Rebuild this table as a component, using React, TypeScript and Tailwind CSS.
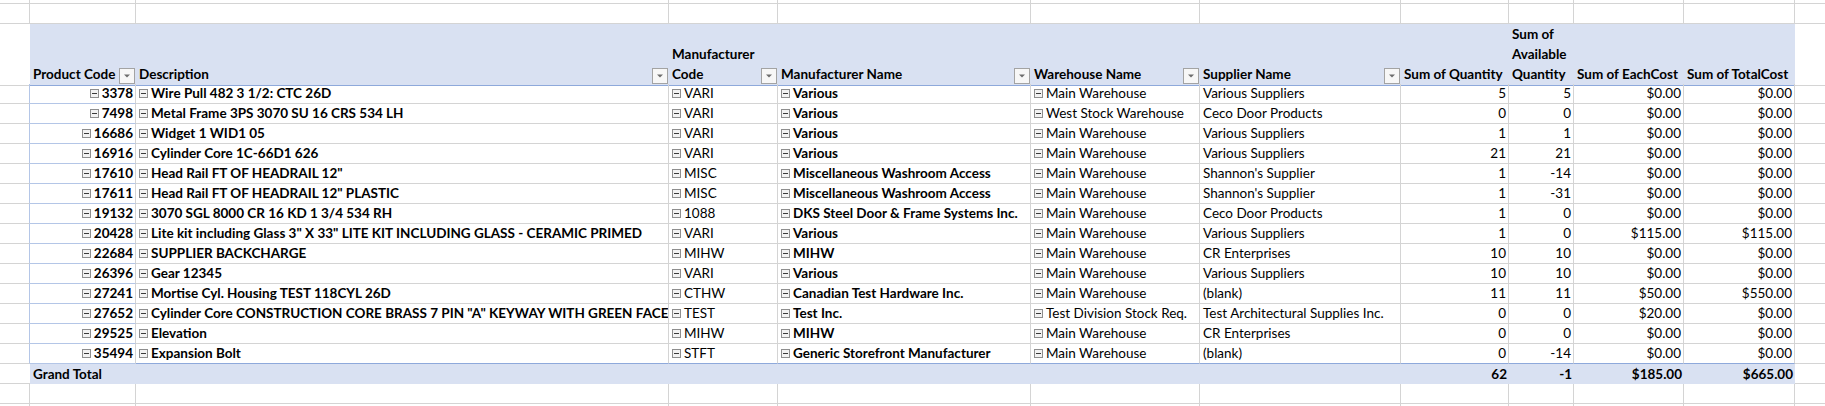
import React from "react";

type Row = {
  code: string;
  desc: string;
  mfrCode: string;
  mfrName: string;
  warehouse: string;
  supplier: string;
  qty: string;
  avail: string;
  each: string;
  total: string;
};

const rows: Row[] = [
  { code: "3378", desc: "Wire Pull 482 3 1/2: CTC 26D", mfrCode: "VARI", mfrName: "Various", warehouse: "Main Warehouse", supplier: "Various Suppliers", qty: "5", avail: "5", each: "$0.00", total: "$0.00" },
  { code: "7498", desc: "Metal Frame 3PS 3070 SU 16 CRS 534 LH", mfrCode: "VARI", mfrName: "Various", warehouse: "West Stock Warehouse", supplier: "Ceco Door Products", qty: "0", avail: "0", each: "$0.00", total: "$0.00" },
  { code: "16686", desc: "Widget 1 WID1 05", mfrCode: "VARI", mfrName: "Various", warehouse: "Main Warehouse", supplier: "Various Suppliers", qty: "1", avail: "1", each: "$0.00", total: "$0.00" },
  { code: "16916", desc: "Cylinder Core 1C-66D1 626", mfrCode: "VARI", mfrName: "Various", warehouse: "Main Warehouse", supplier: "Various Suppliers", qty: "21", avail: "21", each: "$0.00", total: "$0.00" },
  { code: "17610", desc: 'Head Rail FT OF HEADRAIL 12"', mfrCode: "MISC", mfrName: "Miscellaneous Washroom Access", warehouse: "Main Warehouse", supplier: "Shannon's Supplier", qty: "1", avail: "-14", each: "$0.00", total: "$0.00" },
  { code: "17611", desc: 'Head Rail FT OF HEADRAIL 12" PLASTIC', mfrCode: "MISC", mfrName: "Miscellaneous Washroom Access", warehouse: "Main Warehouse", supplier: "Shannon's Supplier", qty: "1", avail: "-31", each: "$0.00", total: "$0.00" },
  { code: "19132", desc: "3070 SGL 8000 CR 16 KD 1 3/4 534 RH", mfrCode: "1088", mfrName: "DKS Steel Door & Frame Systems Inc.", warehouse: "Main Warehouse", supplier: "Ceco Door Products", qty: "1", avail: "0", each: "$0.00", total: "$0.00" },
  { code: "20428", desc: 'Lite kit including Glass 3" X 33" LITE KIT INCLUDING GLASS - CERAMIC PRIMED', mfrCode: "VARI", mfrName: "Various", warehouse: "Main Warehouse", supplier: "Various Suppliers", qty: "1", avail: "0", each: "$115.00", total: "$115.00" },
  { code: "22684", desc: "SUPPLIER BACKCHARGE", mfrCode: "MIHW", mfrName: "MIHW", warehouse: "Main Warehouse", supplier: "CR Enterprises", qty: "10", avail: "10", each: "$0.00", total: "$0.00" },
  { code: "26396", desc: "Gear 12345", mfrCode: "VARI", mfrName: "Various", warehouse: "Main Warehouse", supplier: "Various Suppliers", qty: "10", avail: "10", each: "$0.00", total: "$0.00" },
  { code: "27241", desc: "Mortise Cyl. Housing TEST 118CYL 26D", mfrCode: "CTHW", mfrName: "Canadian Test Hardware Inc.", warehouse: "Main Warehouse", supplier: "(blank)", qty: "11", avail: "11", each: "$50.00", total: "$550.00" },
  { code: "27652", desc: 'Cylinder Core CONSTRUCTION CORE BRASS 7 PIN "A" KEYWAY WITH GREEN FACE', mfrCode: "TEST", mfrName: "Test Inc.", warehouse: "Test Division Stock Req.", supplier: "Test Architectural Supplies Inc.", qty: "0", avail: "0", each: "$20.00", total: "$0.00" },
  { code: "29525", desc: "Elevation", mfrCode: "MIHW", mfrName: "MIHW", warehouse: "Main Warehouse", supplier: "CR Enterprises", qty: "0", avail: "0", each: "$0.00", total: "$0.00" },
  { code: "35494", desc: "Expansion Bolt", mfrCode: "STFT", mfrName: "Generic Storefront Manufacturer", warehouse: "Main Warehouse", supplier: "(blank)", qty: "0", avail: "-14", each: "$0.00", total: "$0.00" },
];

const grid =
  "grid grid-cols-[30px_106px_533px_109px_253px_169px_201px_108px_65px_110px_111px_1fr]";

function Collapse() {
  return (
    <svg width="9" height="9" viewBox="0 0 9 9" className="shrink-0 mr-[3px] mb-[5px]">
      <rect x="0.5" y="0.5" width="8" height="8" fill="#f2f2f2" stroke="#8e8e8e" />
      <line x1="2" y1="4.5" x2="7" y2="4.5" stroke="#3a3a3a" />
    </svg>
  );
}

function Filter() {
  return (
    <svg width="16" height="16" viewBox="0 0 16 16" className="shrink-0 mb-[1px]">
      <rect x="0.5" y="0.5" width="15" height="15" fill="#f7f7f7" stroke="#a3a3a3" />
      <polygon points="5,6.5 11,6.5 8,9.5" fill="#6d6d6d" />
    </svg>
  );
}

function GridRow({ h = "h-[20px]" }: { h?: string }) {
  return (
    <div className={`${grid} ${h}`}>
      {Array.from({ length: 12 }).map((_, i) => (
        <div
          key={i}
          className={`border-b border-[#d4d4d4] ${i < 11 ? "border-r" : ""}`}
        />
      ))}
    </div>
  );
}

const cell = "border-b border-r border-[#d4d4d4] flex items-end leading-[20px] whitespace-nowrap overflow-hidden";

export default function App() {
  return (
    <div className="w-[1825px] h-[406px] overflow-hidden bg-white text-black text-[13.5px] font-['Lato','Liberation_Sans',sans-serif]">
      <GridRow h="h-[4px]" />
      <GridRow />

      {/* header */}
      <div className={`${grid} h-[60px]`}>
        <div className="border-b border-[#d4d4d4]" />
        <div className="bg-[#d9e1f2] border-b border-[#8ea9db] flex items-end justify-between pl-[3px] pr-[1px] font-bold leading-[20px]">
          <span className="mb-[1px]">Product Code</span>
          <Filter />
        </div>
        <div className="bg-[#d9e1f2] border-b border-[#8ea9db] flex items-end justify-between pl-[3px] pr-[1px] font-bold leading-[20px]">
          <span className="mb-[1px]">Description</span>
          <Filter />
        </div>
        <div className="bg-[#d9e1f2] border-b border-[#8ea9db] flex items-end justify-between pl-[3px] pr-[1px] font-bold leading-[20px]">
          <span className="mb-[1px]">
            Manufacturer
            <br />
            Code
          </span>
          <Filter />
        </div>
        <div className="bg-[#d9e1f2] border-b border-[#8ea9db] flex items-end justify-between pl-[3px] pr-[1px] font-bold leading-[20px]">
          <span className="mb-[1px]">Manufacturer Name</span>
          <Filter />
        </div>
        <div className="bg-[#d9e1f2] border-b border-[#8ea9db] flex items-end justify-between pl-[3px] pr-[1px] font-bold leading-[20px]">
          <span className="mb-[1px]">Warehouse Name</span>
          <Filter />
        </div>
        <div className="bg-[#d9e1f2] border-b border-[#8ea9db] flex items-end justify-between pl-[3px] pr-[1px] font-bold leading-[20px]">
          <span className="mb-[1px]">Supplier Name</span>
          <Filter />
        </div>
        <div className="bg-[#d9e1f2] border-b border-[#8ea9db] flex items-end pl-[3px] font-bold leading-[20px] whitespace-nowrap">
          <span className="mb-[1px]">Sum of Quantity</span>
        </div>
        <div className="bg-[#d9e1f2] border-b border-[#8ea9db] flex items-end pl-[3px] font-bold leading-[20px]">
          <span className="mb-[1px]">
            Sum of
            <br />
            Available
            <br />
            Quantity
          </span>
        </div>
        <div className="bg-[#d9e1f2] border-b border-[#8ea9db] flex items-end pl-[3px] font-bold leading-[20px] whitespace-nowrap">
          <span className="mb-[1px]">Sum of EachCost</span>
        </div>
        <div className="bg-[#d9e1f2] border-b border-[#8ea9db] flex items-end pl-[3px] font-bold leading-[20px] whitespace-nowrap">
          <span className="mb-[1px]">Sum of TotalCost</span>
        </div>
        <div className="border-b border-[#d4d4d4]" />
      </div>

      {/* data rows */}
      {rows.map((r, i) => {
        const last = i === rows.length - 1;
        const b = last ? "border-b-[#8ea9db]" : "";
        return (
          <div key={r.code} className={`${grid} h-[20px]`}>
            <div className="border-b border-r border-[#d4d4d4] border-r-[#b4c6e7]" />
            <div className={`${cell} border-b-[#b4c6e7] ${b} justify-end pr-[2px] font-bold`}>
              <Collapse />
              <span>{r.code}</span>
            </div>
            <div className={`${cell} ${b} pl-[3px] font-bold`}>
              <Collapse />
              <span>{r.desc}</span>
            </div>
            <div className={`${cell} ${b} pl-[3px]`}>
              <Collapse />
              <span>{r.mfrCode}</span>
            </div>
            <div className={`${cell} ${b} pl-[3px] font-bold`}>
              <Collapse />
              <span>{r.mfrName}</span>
            </div>
            <div className={`${cell} ${b} pl-[3px]`}>
              <Collapse />
              <span>{r.warehouse}</span>
            </div>
            <div className={`${cell} ${b} pl-[3px]`}>
              <span>{r.supplier}</span>
            </div>
            <div className={`${cell} ${b} justify-end pr-[2px]`}>{r.qty}</div>
            <div className={`${cell} ${b} justify-end pr-[2px]`}>{r.avail}</div>
            <div className={`${cell} ${b} justify-end pr-[2px]`}>{r.each}</div>
            <div className={`${cell} ${b} justify-end pr-[2px]`}>{r.total}</div>
            <div className="border-b border-[#d4d4d4]" />
          </div>
        );
      })}

      {/* grand total */}
      <div className={`${grid} h-[20px] font-bold leading-[20px]`}>
        <div className="border-b border-[#d4d4d4]" />
        <div className="col-span-6 bg-[#d9e1f2] flex items-end pl-[3px]">Grand Total</div>
        <div className="bg-[#d9e1f2] flex items-end justify-end pr-[2px]">62</div>
        <div className="bg-[#d9e1f2] flex items-end justify-end pr-[2px]">-1</div>
        <div className="bg-[#d9e1f2] flex items-end justify-end pr-[2px]">$185.00</div>
        <div className="bg-[#d9e1f2] flex items-end justify-end pr-[2px]">$665.00</div>
        <div className="border-b border-[#d4d4d4]" />
      </div>

      <GridRow />
      <GridRow />
    </div>
  );
}
